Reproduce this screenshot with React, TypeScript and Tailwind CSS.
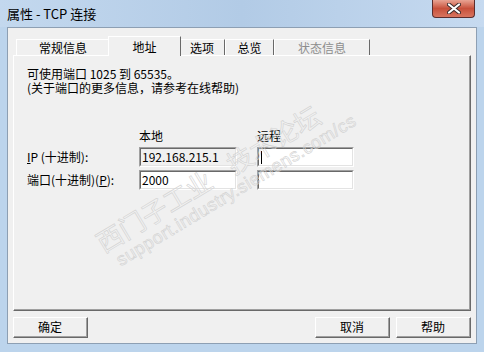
import React from "react";

const FONT = "font-['SimSun','Noto_Sans_CJK_SC',sans-serif]";

type TabItem = { label: string; width: string; active?: boolean; disabled?: boolean };

const TABS: TabItem[] = [
  { label: "常规信息", width: "w-[94px]" },
  { label: "地址", width: "w-[73px]", active: true },
  { label: "选项", width: "w-[46px]" },
  { label: "总览", width: "w-[49px]" },
  { label: "状态信息", width: "w-[96px]", disabled: true },
];

function Tab({ tab }: { tab: TabItem }) {
  if (tab.active) {
    return (
      <div
        className={`${tab.width} h-[20px] -mx-[2px] relative z-10 -mb-px flex items-center justify-center border-t border-l border-white border-r border-r-[#696969] bg-[#f0f0f0] text-[12px] text-black`}
      >
        {tab.label}
      </div>
    );
  }
  return (
    <div
      className={`${tab.width} h-[16px] flex items-center justify-center border-t border-l border-white border-r border-r-[#696969] bg-[#f0f0f0] text-[12px] ${
        tab.disabled ? "text-[#8d8d8d]" : "text-black"
      }`}
    >
      {tab.label}
    </div>
  );
}

function Field({ value, disabled, w, caret }: { value?: string; disabled?: boolean; w: string; caret?: boolean }) {
  return (
    <div
      className={`${w} h-[20px] border-t border-l border-[#a0a0a0] border-r border-b border-r-white border-b-white flex items-center ${
        disabled ? "bg-[#f0f0f0]" : "bg-white"
      }`}
    >
      <div className="flex-1 h-full border-t border-l border-[#696969] border-r border-b border-r-[#e3e3e3] border-b-[#e3e3e3] flex items-center px-[1px] text-[12px] leading-none text-black">
        {value}
        {caret && <span className="w-px h-[13px] bg-black ml-[1px]" />}
      </div>
    </div>
  );
}

function Button({ label }: { label: string }) {
  return (
    <div className="w-[75px] h-[21px] border-t border-l border-white border-r border-b border-r-[#696969] border-b-[#696969] bg-[#f0f0f0] flex items-center justify-center">
      <div className="w-full h-full border-r border-b border-r-[#a0a0a0] border-b-[#a0a0a0] flex items-center justify-center text-[12px] text-black">
        {label}
      </div>
    </div>
  );
}

export default function App() {
  return (
    <div className={`w-[484px] h-[352px] flex flex-col bg-[#bcd4ec] overflow-hidden ${FONT}`}>
      {/* title bar */}
      <div className="h-[27px] flex items-start relative bg-gradient-to-r from-[#c3d8ee] via-[#b2cbe6] to-[#c6daf0]">
        <div className="pl-[7px] pt-[4px] text-[13px] text-black font-['Noto_Sans_CJK_SC',sans-serif]">
          属性 - TCP 连接
        </div>
        <div className="ml-auto mr-[9px] w-[43px] h-[18px] rounded-b-[4px] border border-t-0 border-[#5b2d2d] bg-gradient-to-b from-[#e8a393] via-[#c7503b] to-[#d8745f] flex items-center justify-center">
          <svg width="14" height="11" viewBox="0 0 14 11">
            <path
              d="M2 1.5 L12 9.5 M12 1.5 L2 9.5"
              stroke="#3b2a2a"
              strokeWidth="4"
              strokeLinecap="round"
            />
            <path d="M2 1.5 L12 9.5 M12 1.5 L2 9.5" stroke="#ffffff" strokeWidth="2.2" strokeLinecap="round" />
          </svg>
        </div>
      </div>

      {/* client area */}
      <div className="mx-[7px] mb-[8px] flex-1 flex flex-col border border-[#8d9fb3] bg-[#f0f0f0] px-[5px] pt-[8px] relative">
        {/* tabs */}
        <div className="flex items-end pl-[3px] h-[19px]">
          {TABS.map((t) => (
            <Tab key={t.label} tab={t} />
          ))}
        </div>

        {/* panel */}
        <div className="h-[256px] border-t border-l border-white border-r border-b border-r-[#696969] border-b-[#696969] relative overflow-hidden">
          <div className="h-full border-r border-b border-r-[#a0a0a0] border-b-[#a0a0a0] pl-[13px] pt-[11px] text-[12px] text-black">
            <div className="leading-[14px]">可使用端口 1025 到 65535。</div>
            <div className="leading-[14px]">(关于端口的更多信息，请参考在线帮助)</div>

            <div className="mt-[34px] grid grid-cols-[112px_118px_100px] items-center gap-y-[3px]">
              <div />
              <div className="leading-[14px] mb-[1px]">本地</div>
              <div className="leading-[14px] mb-[1px]">远程</div>

              <div>
                <span className="underline">I</span>P (十进制):
              </div>
              <Field w="w-[98px]" value="192.168.215.1" disabled />
              <Field w="w-[97px]" caret />

              <div>
                端口(十进制)(<span className="underline">P</span>):
              </div>
              <Field w="w-[98px]" value="2000" />
              <Field w="w-[97px]" />
            </div>
          </div>

          {/* watermark */}
          <div className="absolute left-[102px] bottom-[36px] -rotate-[31deg] origin-bottom-left pointer-events-none select-none text-transparent [-webkit-text-stroke:0.6px_#d2d2d2] whitespace-nowrap">
            <div className="text-[26px] leading-[30px] font-['Noto_Sans_CJK_SC',sans-serif]">
              西门子工业<span className="ml-[22px]">技术论坛</span>
            </div>
            <div className="text-[18px] leading-[20px] font-['Liberation_Sans',sans-serif] pl-[8px] tracking-[0.5px]">
              support.industry.siemens.com/cs
            </div>
          </div>
        </div>

        {/* buttons */}
        <div className="flex items-center mt-[6px]">
          <Button label="确定" />
          <div className="ml-auto flex gap-[6px]">
            <Button label="取消" />
            <Button label="帮助" />
          </div>
        </div>
      </div>
    </div>
  );
}
